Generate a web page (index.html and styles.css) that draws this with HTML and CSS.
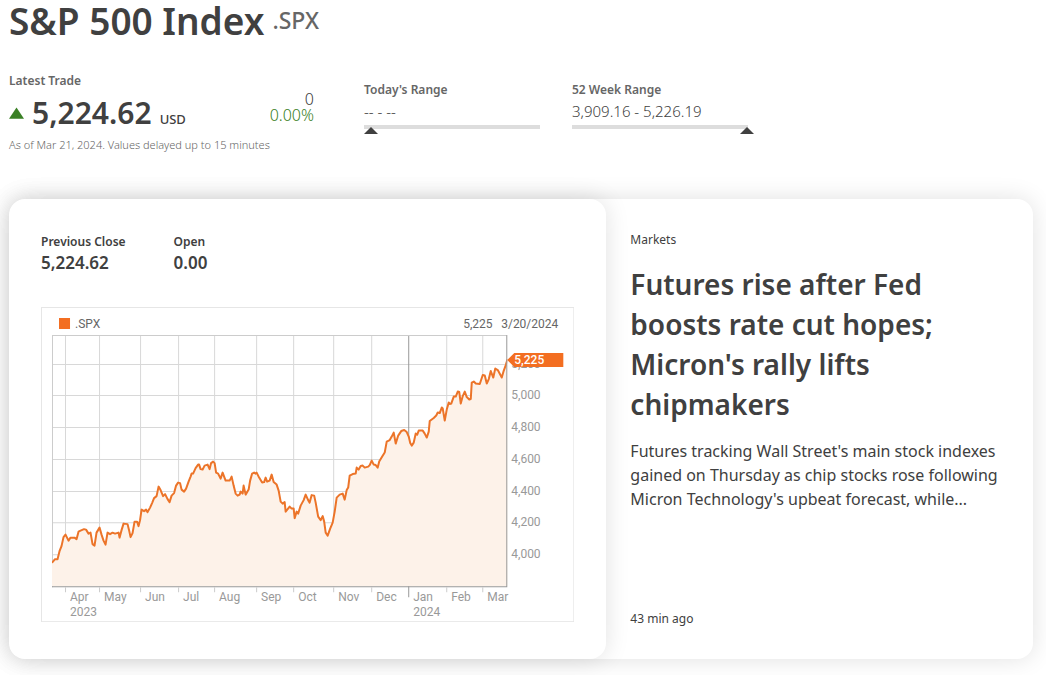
FILE: index.html
```html
<!DOCTYPE html>
<html lang="en">
<head>
<meta charset="utf-8">
<meta name="viewport" content="width=device-width, initial-scale=1">
<title>S&amp;P 500 Index .SPX</title>
<link rel="stylesheet" href="styles.css">
</head>
<body>
<main class="page">
  <header class="title-row">
    <h1 class="title">S&amp;P 500 Index</h1>
    <span class="ticker">.SPX</span>
  </header>

  <section class="quote">
    <div class="trade">
      <div class="label">Latest Trade</div>
      <div class="trade-row">
        <svg class="up-arrow" viewBox="0 0 16 12" aria-hidden="true"><path d="M8 0 16 12H0z"/></svg>
        <span class="price">5,224.62</span>
        <span class="currency">USD</span>
        <div class="change"><span>0</span><span class="positive">0.00%</span></div>
      </div>
      <p class="note">As of Mar 21, 2024. Values delayed up to 15 minutes</p>
    </div>
    <div class="range">
      <div class="label">Today's Range</div>
      <div class="range-value">-- - --</div>
      <div class="track"><svg class="marker marker-low" viewBox="0 0 14 7" aria-hidden="true"><path d="M7 0 14 7H0z"/></svg></div>
    </div>
    <div class="range">
      <div class="label">52 Week Range</div>
      <div class="range-value">3,909.16 - 5,226.19</div>
      <div class="track"><svg class="marker marker-high" viewBox="0 0 14 7" aria-hidden="true"><path d="M7 0 14 7H0z"/></svg></div>
    </div>
  </section>

  <section class="panels">
    <div class="chart-card">
      <dl class="stats">
        <div><dt>Previous Close</dt><dd>5,224.62</dd></div>
        <div><dt>Open</dt><dd>0.00</dd></div>
      </dl>
      <svg class="chart" viewBox="41 307 533 315" role="img" aria-label=".SPX one year chart">
        <rect class="frame" x="41.5" y="307.5" width="532" height="314"/>
        <rect class="accent" x="59" y="318" width="11" height="11"/>
        <text class="legend" x="75" y="328">.SPX</text>
        <text class="legend" x="463" y="328">5,225</text>
        <text class="legend" x="558" y="328" text-anchor="end">3/20/2024</text>
        <path class="grid" d="M65.5 336V586M99.5 336V586M140.5 336V586M178.5 336V586M214.5 336V586M256.5 336V586M293.5 336V586M333.5 336V586M371.5 336V586M446.5 336V586M482.5 336V586M52 364.5H506M52 395.5H506M52 427.5H506M52 459.5H506M52 491.5H506M52 522.5H506M52 554.5H506"/>
        <path class="year" d="M408.5 336V597"/>
        <path class="plot-edge" d="M52.5 587V335.5H506"/>
        <defs>
          <path id="series" d="M40 562H52.5L55 559 57.5 559 59.5 551 61.5 546 63.5 537 65.5 534.5 68.5 540.5 70.5 537.5 74.5 537.5 76.5 539 78.5 531.5 80.5 530.5 84 529 86 529.5 88.5 533.5 90.5 532.5 92.5 544 94.5 545.5 96.5 532.5 99.5 527.5 101.5 534.5 103.5 540.5 105.5 544.5 107.5 532.5 110 534 112.5 532.5 115 533.5 118.5 532.5 119.5 537.5 121.5 530 123.5 523.5 127.5 524 129 530 130.5 537 132.5 533 134.5 521.5 137 521.5 138.5 526 140 520 141.5 509.5 144 511 146 509.5 147.5 512 150 507.5 152 503 154 498 156.5 496 158.5 486.5 160.5 490 163 496 165 494 167.5 499 169.5 502 171.5 495.5 174 493 176 485.5 178 482.5 180 483 181.5 489.5 184 491.5 186 488.5 188.5 481.5 190.5 476.5 191.5 473.5 193 473.5 195.5 468 198 464.5 199 464.5 200.5 469 202.5 469.5 204.5 465.5 207.5 464.5 209.5 469 211 463 213 461.5 214.5 463 216 472.5 218 473.5 220.5 478.5 222.5 472.5 225.5 480.5 229.5 480.5 231.5 476.5 233.5 485.5 235.5 493.5 237.5 495.5 239.5 494.5 240.5 491.5 242.5 493.5 243.5 485.5 245.5 494.5 248.5 489.5 250 480.5 252 473.5 254 472.5 255.5 473.5 256.5 472.5 259 477.5 262 482.5 264 482 265.5 477.5 267 481.5 269.5 480.5 271.5 474.5 273.5 482 276.5 484.5 278.5 490.5 280.5 501.5 282.5 503.5 284.5 502 285.5 511.5 289.5 506.5 291.5 508.5 293.5 508.5 294.5 518 296.5 511.5 298 513.5 300.5 505.5 303.5 500 305.5 494.5 308 500 309.5 502.5 311.5 495 314 495.5 315.5 502.5 318 516.5 320.5 520 322.5 516 324 521.5 325.5 532.5 327.5 535.5 330 528.5 332.5 522.5 334.5 511.5 336.5 497.5 339.5 494.5 342.5 493.5 344.5 499.5 346.5 490 348 487.5 349.5 475.5 352.5 474 355.5 473.5 356.5 467.5 358.5 469.5 360.5 466 362.5 465.5 364.5 467.5 368 466.5 369.5 465 371.5 460.5 373.5 464.5 375.5 465 377.5 467.5 379 461.5 382 456.5 384.5 452.5 386.5 441.5 389.5 440 391.5 436.5 393.5 432.5 395.5 443.5 398 435.5 401 431 404 430 406.5 432 408.5 436.5 410 443 411.5 445.5 413.5 442.5 415.5 433.5 417 434.5 418.5 430.5 422.5 430.5 424.5 433.5 426.5 437.5 428.5 431.5 429.5 421 433.5 418 436 415.5 437.5 412.5 439.5 413 441.5 407.5 442.5 408.5 444.5 420.5 446.5 409.5 448.5 402.5 449.5 404 451 403.5 453.5 396.5 455.5 396.5 457.5 391.5 459 392 460.5 403.5 462.5 396 464.5 391.5 466.5 397 469 399.5 470.5 399 471.5 382.5 473.5 381.5 475.5 383.5 479.5 384 481 379.5 482.5 375 484.5 375.5 486.5 383.5 488.5 379 490.5 371 493 377.5 495 368.5 497.5 370 501.5 377.5 503.5 370.5 505.5 365 507 360H520V600H40Z"/>
          <clipPath id="plot-area"><path d="M52 335H507V586H52Z"/></clipPath>
        </defs>
        <g clip-path="url(#plot-area)">
          <use class="area" href="#series"/>
          <use class="line" href="#series"/>
        </g>
        <path class="axis" d="M52 586.5H506.5V335"/>
        <path class="tick" d="M65.5 587V592M99.5 587V592M140.5 587V592M178.5 587V592M214.5 587V592M256.5 587V592M293.5 587V592M333.5 587V592M371.5 587V592M446.5 587V592M482.5 587V592"/>
        <g class="scale">
          <text x="511" y="368">5,200</text>
          <text x="511" y="399">5,000</text>
          <text x="511" y="431">4,800</text>
          <text x="511" y="463">4,600</text>
          <text x="511" y="495">4,400</text>
          <text x="511" y="526">4,200</text>
          <text x="511" y="558">4,000</text>
          <text x="70" y="601">Apr</text><text x="70" y="616">2023</text>
          <text x="104" y="601">May</text>
          <text x="145" y="601">Jun</text>
          <text x="183" y="601">Jul</text>
          <text x="219" y="601">Aug</text>
          <text x="261" y="601">Sep</text>
          <text x="298" y="601">Oct</text>
          <text x="338" y="601">Nov</text>
          <text x="376" y="601">Dec</text>
          <text x="413" y="601">Jan</text><text x="413" y="616">2024</text>
          <text x="451" y="601">Feb</text>
          <text x="487" y="601">Mar</text>
        </g>
        <path class="accent" d="M507 360 514 353H563V367H514Z"/>
        <text class="flag" x="514" y="364">5,225</text>
      </svg>
    </div>

    <article class="story">
      <div class="story-meta">Markets</div>
      <h2 class="headline">Futures rise after Fed boosts rate cut hopes; Micron's rally lifts chipmakers</h2>
      <p class="summary">Futures tracking Wall Street's main stock indexes gained on Thursday as chip stocks rose following Micron Technology's upbeat forecast, while...</p>
      <time class="story-meta story-time">43 min ago</time>
    </article>
  </section>
</main>
</body>
</html>
```
FILE: styles.css
```css
* {
  box-sizing: border-box;
}

body {
  margin: 0;
  background: #fff;
  color: #404040;
  font-family: "Noto Sans", "Open Sans", sans-serif;
}

h1, h2, p, dl, dd {
  margin: 0;
}

.page {
  padding: 0 13px 16px 9px;
}

.title-row {
  display: flex;
  align-items: center;
  gap: 8px;
}

.title {
  font-size: 37px;
  font-weight: 600;
  line-height: 41px;
}

.ticker {
  color: #666;
  font-size: 23px;
  font-weight: 500;
  line-height: 41px;
}

.quote {
  display: flex;
  margin-top: 32px;
}

.label {
  color: #666;
  font-size: 12px;
  font-weight: 600;
  line-height: 16px;
}

.trade {
  width: 305px;
  margin-right: 50px;
}

.trade-row {
  display: flex;
  align-items: baseline;
  height: 48px;
  line-height: 48px;
}

.up-arrow {
  align-self: center;
  width: 15px;
  height: 12px;
  fill: #3a8025;
}

.price {
  margin: 0 8px;
  font-size: 30px;
  font-weight: 600;
}

.currency {
  font-size: 13px;
  font-weight: 500;
}

.change {
  display: flex;
  flex-direction: column;
  margin: 2px 0 0 auto;
  align-self: flex-start;
  font-size: 16px;
  font-weight: 300;
  line-height: 16px;
  text-align: right;
}

.positive {
  color: #3a8025;
}

.note {
  color: #666;
  font-size: 11px;
  font-weight: 300;
  line-height: 16px;
}

.range {
  width: 176px;
  margin: 9px 32px 0 0;
}

.range-value {
  font-size: 15px;
  font-weight: 300;
  line-height: 27px;
}

.track {
  position: relative;
  height: 4px;
  background: #ddd;
}

.marker {
  position: absolute;
  top: 2px;
  width: 14px;
  height: 7px;
  fill: #404040;
}

.marker-low {
  left: 0;
}

.marker-high {
  right: -6px;
}

.panels {
  display: grid;
  grid-template-columns: 7fr 5fr;
  min-height: 460px;
  margin-top: 46px;
  border-radius: 16px;
  box-shadow: 0 0 24px rgba(0, 0, 0, 0.12);
}

.chart-card {
  padding: 34px 32px 37px;
  border-radius: 16px;
  box-shadow: 0 0 24px rgba(0, 0, 0, 0.12);
}

.stats {
  display: flex;
  gap: 48px;
  margin-bottom: 32px;
}

.stats dt {
  font-size: 12px;
  font-weight: 600;
  line-height: 18px;
}

.stats dd {
  font-size: 17px;
  font-weight: 600;
  line-height: 24px;
}

.chart {
  display: block;
  width: 100%;
  font-family: Roboto, sans-serif;
  font-size: 12px;
}

.frame {
  fill: none;
  stroke: #e6e6e6;
}

.accent {
  fill: #f36e21;
}

.legend {
  fill: #666;
}

.grid {
  fill: none;
  stroke: #d8d8d8;
}

.year {
  stroke: #999;
}

.plot-edge {
  fill: none;
  stroke: #ccc;
}

.area {
  fill: #fdf2e9;
}

.line {
  fill: none;
  stroke: #ec7429;
  stroke-width: 2px;
  stroke-linejoin: round;
}

.axis {
  fill: none;
  stroke: #999;
}

.tick {
  stroke: #ccc;
}

.scale {
  fill: #999;
}

.flag {
  fill: #fff;
  font-weight: 500;
}

.story {
  display: flex;
  flex-direction: column;
  padding: 33px 24px 32px;
}

.story-meta {
  font-size: 12px;
  line-height: 16px;
}

.headline {
  margin-top: 16px;
  font-size: 28px;
  font-weight: 600;
  line-height: 40px;
}

.summary {
  margin-top: 15px;
  font-size: 16px;
  line-height: 24px;
}

.story-time {
  margin-top: auto;
}
```
